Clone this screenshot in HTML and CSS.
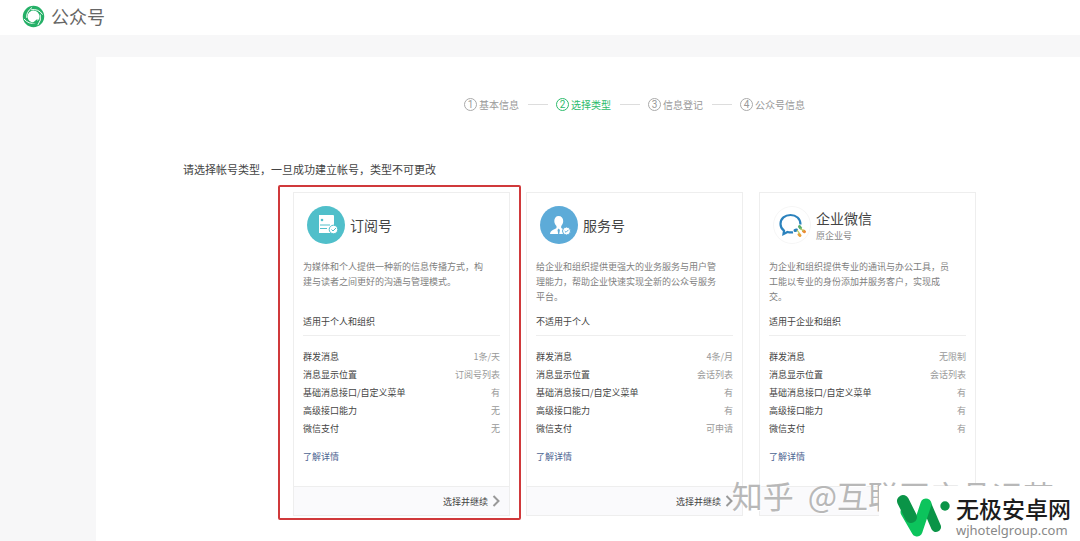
FILE: index.html
```html
<!DOCTYPE html>
<html lang="zh-CN">
<head>
<meta charset="utf-8">
<meta name="viewport" content="width=device-width, initial-scale=1">
<title>公众号</title>
<link rel="stylesheet" href="styles.css">
</head>
<body>
<header class="topbar">
  <svg class="logo" viewBox="0 0 24 24" aria-hidden="true">
    <circle cx="12" cy="12" r="8.700" fill="none" stroke="#25b067" stroke-width="5"/>
    <g fill="none" stroke="#fff" stroke-width="1">
      <path d="M5 13.500Q4 7.500 10.500 2.500"/>
      <path d="M9.500 5Q17 3.500 21.500 10"/>
      <path d="M19 10Q20.500 16 16.500 21"/>
      <path d="M14 18.800Q7 20.500 2 14.500"/>
    </g>
    <path d="M10.500 19l5.500-4.500.5 5z" fill="#25b067"/>
  </svg>
  <span class="brand">公众号</span>
</header>

<main class="panel">
  <ol class="steps">
    <li class="step"><span class="num">1</span>基本信息</li>
    <li class="step active"><span class="num">2</span>选择类型</li>
    <li class="step"><span class="num">3</span>信息登记</li>
    <li class="step"><span class="num">4</span>公众号信息</li>
  </ol>

  <h1 class="prompt">请选择帐号类型，一旦成功建立帐号，类型不可更改</h1>

  <div class="cards">
    <section class="card marked">
      <div class="head">
        <svg class="icon" viewBox="0 0 38 38" aria-hidden="true">
          <circle cx="19" cy="19" r="19" fill="#50bfca"/>
          <path d="M12 9h14a1 1 0 0 1 1 1v17H12z" fill="#fff"/>
          <circle cx="15" cy="14" r="1.300" fill="#50bfca"/>
          <path d="M13 19h10M13 22.500h7" stroke="#50bfca" stroke-width="1"/>
          <circle cx="26.500" cy="23.500" r="4.300" fill="#fff" stroke="#50bfca"/>
          <path d="M24.500 23.500l1.500 1.500 3-3" fill="none" stroke="#50bfca"/>
        </svg>
        <h2 class="name">订阅号</h2>
      </div>
      <p class="desc">为媒体和个人提供一种新的信息传播方式，构<br>建与读者之间更好的沟通与管理模式。</p>
      <p class="fit">适用于个人和组织</p>
      <table class="specs">
        <tr><th scope="row">群发消息</th><td>1条/天</td></tr>
        <tr><th scope="row">消息显示位置</th><td>订阅号列表</td></tr>
        <tr><th scope="row">基础消息接口/自定义菜单</th><td>有</td></tr>
        <tr><th scope="row">高级接口能力</th><td>无</td></tr>
        <tr><th scope="row">微信支付</th><td>无</td></tr>
      </table>
      <a class="more" href="#">了解详情</a>
      <button class="choose" type="button">选择并继续
        <svg class="chevron" viewBox="0 0 8 12" aria-hidden="true"><path d="M1.500 1L6.500 6L1.500 11"/></svg>
      </button>
    </section>

    <section class="card">
      <div class="head">
        <svg class="icon" viewBox="0 0 38 38" aria-hidden="true">
          <circle cx="19" cy="19" r="19" fill="#5dabd8"/>
          <path d="M18.500 10c3 0 4.700 2 4.700 5 0 2-.8 3.800-2 5v2c1.500 1 4.300 1.500 6.300 3.200V28H10c.3-4 5-4.500 6.500-6v-2c-1.300-1.200-2.200-3-2.200-5 0-3 1.700-5 4.200-5z" fill="#fff"/>
          <path d="M18.700 22.500l1.200 1.500-.7 4h-1l-.7-4z" fill="#5dabd8"/>
          <circle cx="26.500" cy="25" r="4" fill="#fff" stroke="#5dabd8"/>
          <path d="M24.700 25l1.300 1.300 2.500-2.500" fill="none" stroke="#5dabd8"/>
        </svg>
        <h2 class="name">服务号</h2>
      </div>
      <p class="desc">给企业和组织提供更强大的业务服务与用户管<br>理能力，帮助企业快速实现全新的公众号服务<br>平台。</p>
      <p class="fit">不适用于个人</p>
      <table class="specs">
        <tr><th scope="row">群发消息</th><td>4条/月</td></tr>
        <tr><th scope="row">消息显示位置</th><td>会话列表</td></tr>
        <tr><th scope="row">基础消息接口/自定义菜单</th><td>有</td></tr>
        <tr><th scope="row">高级接口能力</th><td>有</td></tr>
        <tr><th scope="row">微信支付</th><td>可申请</td></tr>
      </table>
      <a class="more" href="#">了解详情</a>
      <button class="choose" type="button">选择并继续
        <svg class="chevron" viewBox="0 0 8 12" aria-hidden="true"><path d="M1.500 1L6.500 6L1.500 11"/></svg>
      </button>
    </section>

    <section class="card">
      <div class="head">
        <svg class="icon" viewBox="0 0 38 38" aria-hidden="true">
          <circle cx="19" cy="19" r="18.500" fill="#fff" stroke="#f6f6f6"/>
          <path d="M27.500 18.500C27.500 12.500 23 9 17.500 9S7.500 12.500 7.500 18c0 3 1.300 5 3.500 6.700L10.500 28l4-2c1.800.5 3.500.6 5.500.3" fill="none" stroke="#2b82bd" stroke-width="2.200"/>
          <g stroke-width="3" stroke-linecap="round">
            <path d="M26.500 20.500l1 1.500" stroke="#58ad6b"/>
            <path d="M30.500 25l1 .7" stroke="#ec8b35"/>
            <path d="M26 28.500l1 1" stroke="#e8a13c"/>
            <path d="M22 24.500l1.500-.5" stroke="#2b82bd"/>
          </g>
          <path d="M24 24l3 4M27.500 22.500l3 2.500" stroke="#b4c95c" stroke-width="1.200"/>
        </svg>
        <div>
          <h2 class="name">企业微信</h2>
          <p class="alias">原企业号</p>
        </div>
      </div>
      <p class="desc">为企业和组织提供专业的通讯与办公工具，员<br>工能以专业的身份添加并服务客户，实现成<br>交。</p>
      <p class="fit">适用于企业和组织</p>
      <table class="specs">
        <tr><th scope="row">群发消息</th><td>无限制</td></tr>
        <tr><th scope="row">消息显示位置</th><td>会话列表</td></tr>
        <tr><th scope="row">基础消息接口/自定义菜单</th><td>有</td></tr>
        <tr><th scope="row">高级接口能力</th><td>有</td></tr>
        <tr><th scope="row">微信支付</th><td>有</td></tr>
      </table>
      <a class="more" href="#">了解详情</a>
      <div class="choose"></div>
    </section>
  </div>
</main>

<div class="watermark"><span>知乎</span><span>@互联网产品运营</span></div>
<aside class="site">
  <svg class="site-logo" viewBox="0 0 54 44" aria-hidden="true">
    <g fill="none" stroke-linecap="round" stroke-linejoin="round">
      <path d="M31 12L40 33" stroke="#0a9447" stroke-width="10"/>
      <path d="M10 18L21 37L30 10" stroke="#0cc45c" stroke-width="11"/>
      <path d="M7 7L15 23" stroke="#0a9447" stroke-width="12"/>
    </g>
    <circle cx="49" cy="12" r="4.700" fill="#0a9447"/>
  </svg>
  <div>
    <div class="site-name">无极安卓网</div>
    <div class="site-url">wjhotelgroup.com</div>
  </div>
</aside>
</body>
</html>
```
FILE: styles.css
```css
* {
  box-sizing: border-box;
  margin: 0;
  padding: 0;
}

body {
  position: relative;
  display: flex;
  flex-direction: column;
  height: 100vh;
  overflow: hidden;
  background: #f7f7f8;
  color: #555;
  font-family: "Noto Sans CJK SC", sans-serif;
  font-size: 9px;
  line-height: 15px;
}

.topbar {
  display: flex;
  align-items: center;
  gap: 6px;
  height: 35px;
  padding: 0 22px 3px;
  background: #fff;
}

.logo {
  width: 23px;
  height: 23px;
}

.brand {
  color: #666;
  font-size: 18px;
  line-height: 24px;
}

.panel {
  flex: 1;
  margin: 22px 0 0 96px;
  padding: 40px 104px 0 87px;
  background: #fff;
}

.steps {
  display: flex;
  justify-content: center;
  margin-left: 110px;
  color: #999;
  font-size: 10px;
  list-style: none;
}

.step {
  display: flex;
  align-items: center;
  gap: 2px;
}

.step + .step::before {
  width: 20px;
  height: 1px;
  margin: 0 6px 0 9px;
  background: #ddd;
  content: "";
}

.num {
  width: 13px;
  height: 13px;
  border: 1px solid #aaa;
  border-radius: 50%;
  font-family: Roboto, sans-serif;
  line-height: 11px;
  text-align: center;
}

.active {
  color: #2dbb6c;
}

.active .num {
  border-color: #2dbb6c;
}

.prompt {
  margin-top: 49px;
  color: #444;
  font-size: 11px;
  font-weight: 400;
  line-height: 16px;
}

.cards {
  display: grid;
  grid-template-columns: repeat(3, 1fr);
  gap: 16px;
  margin: 15px 0 0 110px;
}

.card {
  position: relative;
  display: flex;
  flex-direction: column;
  padding: 13px 9px 0;
  border: 1px solid #eee;
}

.marked::after {
  position: absolute;
  inset: -8px -12px -5px -16px;
  border: 2px solid #d0393b;
  border-radius: 2px;
  content: "";
  pointer-events: none;
}

.head {
  display: flex;
  align-items: center;
  gap: 5px;
  height: 38px;
  padding-left: 4px;
}

.icon {
  width: 38px;
  height: 38px;
}

.name {
  color: #444;
  font-size: 14px;
  font-weight: 400;
  line-height: 20px;
}

.alias {
  color: #888;
}

.desc {
  min-height: 45px;
  margin-top: 15px;
  color: #808080;
  white-space: nowrap;
}

.fit {
  margin-top: 10px;
  padding-bottom: 6px;
  border-bottom: 1px solid #eee;
  color: #444;
}

.specs {
  width: 100%;
  margin-top: 11px;
  border-collapse: collapse;
}

.specs th,
.specs td {
  height: 18px;
  font-weight: 400;
}

.specs th {
  color: #444;
  text-align: left;
}

.specs td {
  color: #999;
  text-align: right;
}

.more {
  align-self: flex-start;
  margin-top: 12px;
  color: #4c6492;
  text-decoration: none;
}

.choose {
  display: flex;
  align-items: center;
  justify-content: flex-end;
  gap: 4px;
  height: 29px;
  margin: 22px -9px 0;
  padding: 0 9px;
  border: 0;
  border-top: 1px solid #eee;
  background: #fafafc;
  color: #444;
  font: inherit;
}

.chevron {
  width: 8px;
  height: 12px;
  fill: none;
  stroke: #999;
  stroke-width: 2;
}

.watermark {
  position: absolute;
  right: 26px;
  bottom: 28px;
  display: flex;
  gap: 14px;
  color: #b8b8b8;
  font-size: 31px;
  line-height: 36px;
  text-shadow: 1px 1px 0 #fff;
  white-space: nowrap;
}

.site {
  position: absolute;
  right: 0;
  bottom: 0;
  display: flex;
  align-items: center;
  gap: 6px;
  padding: 8px 9px 3px 17px;
  background: #fff;
}

.site-logo {
  width: 54px;
  height: 44px;
}

.site-name {
  color: #1c1c1c;
  font-size: 23px;
  font-weight: 500;
  line-height: 28px;
}

.site-url {
  color: #888;
  font-family: "Noto Sans", sans-serif;
  font-size: 13px;
  line-height: 16px;
}
```
